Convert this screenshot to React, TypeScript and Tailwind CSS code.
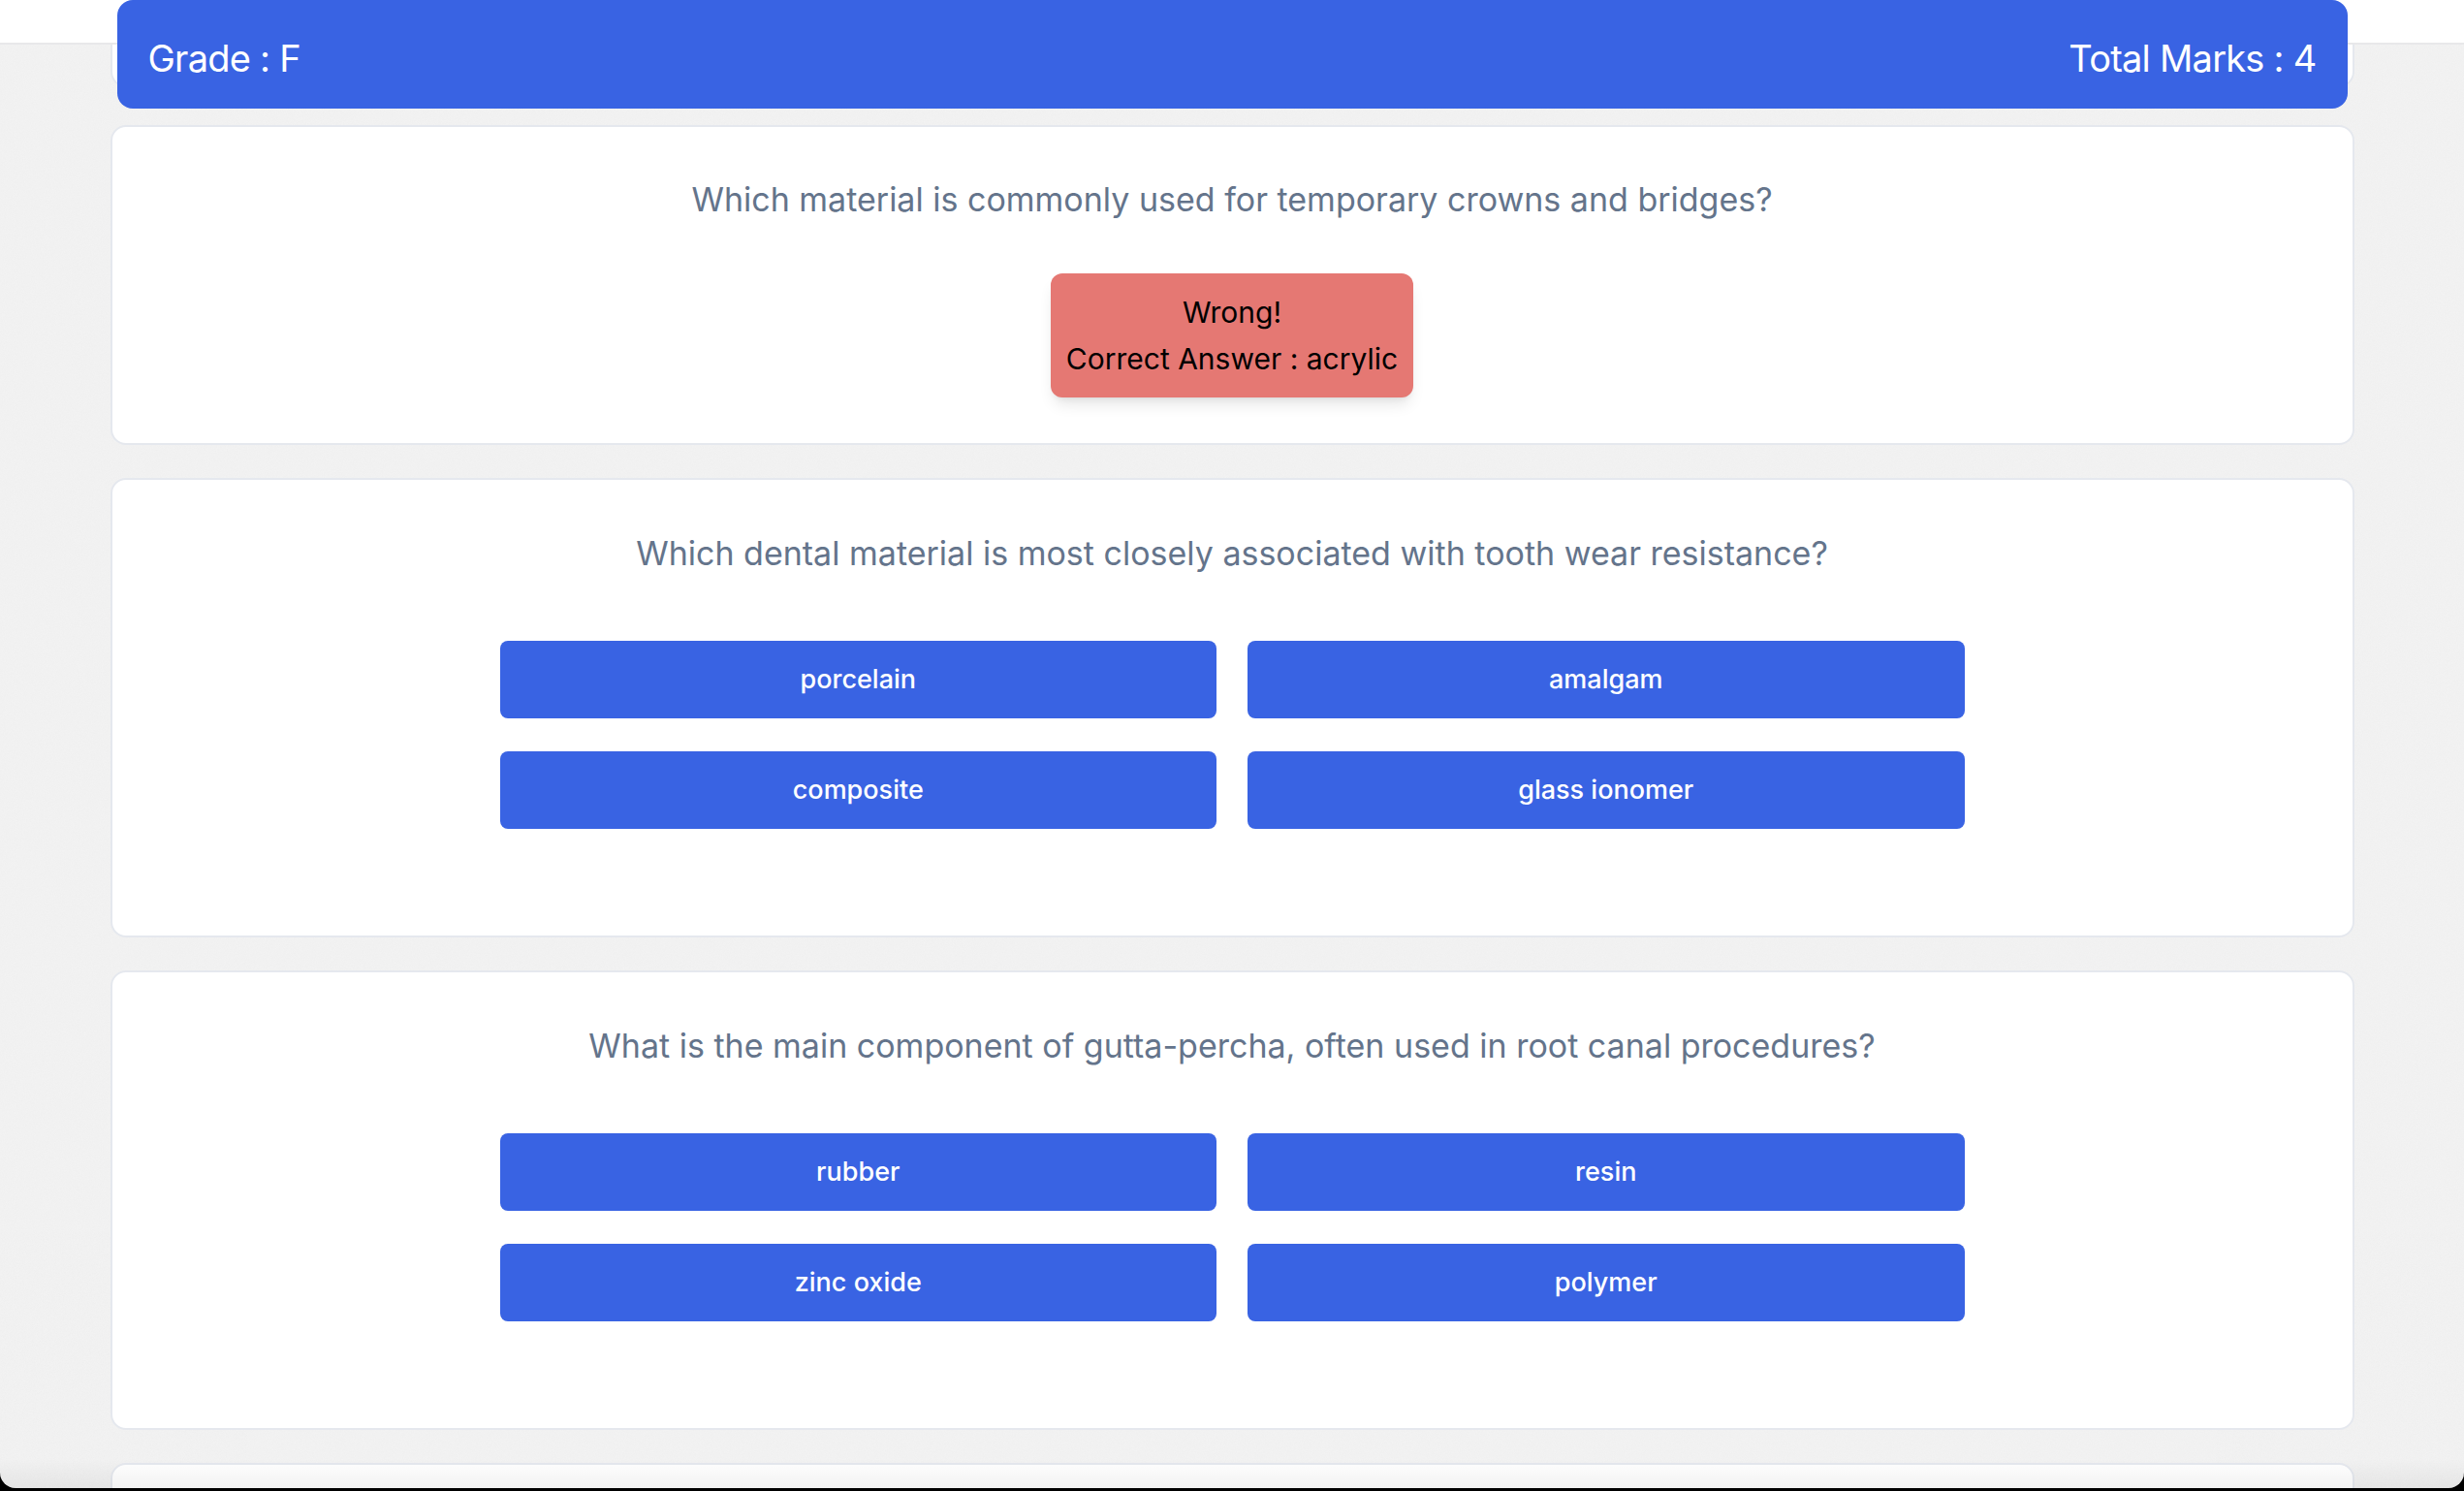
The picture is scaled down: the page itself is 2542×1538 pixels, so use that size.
import React from "react"

type Question = {
  question: string
  options: string[]
}

const questions: Question[] = [
  {
    question: "Which dental material is most closely associated with tooth wear resistance?",
    options: ["porcelain", "amalgam", "composite", "glass ionomer"],
  },
  {
    question: "What is the main component of gutta-percha, often used in root canal procedures?",
    options: ["rubber", "resin", "zinc oxide", "polymer"],
  },
]

function QuestionCard({ q }: { q: Question }) {
  return (
    <div className="bg-white border-2 border-[#e5e8ee] rounded-2xl pt-[52px] pb-[110px] flex flex-col items-center">
      <p className="text-[34px] leading-[48px] text-[#64748b]">{q.question}</p>
      <div className="mt-[66px] w-[1511px] grid grid-cols-2 gap-x-[32px] gap-y-[34px]">
        {q.options.map((opt) => (
          <button
            key={opt}
            className="h-[80px] rounded-lg bg-[#3963e3] text-white text-[27px] font-medium"
          >
            {opt}
          </button>
        ))}
      </div>
    </div>
  )
}

export default function App() {
  return (
    <div className="h-[1538px] bg-black overflow-hidden" style={{ fontFamily: "Inter, 'Noto Sans', sans-serif" }}>
      <div className="relative h-[1535px] rounded-b-[16px] overflow-hidden bg-[#f3f3f3]">
        {/* paper-like noise of the page background */}
        <svg className="absolute inset-0 w-full h-full opacity-[0.35]" aria-hidden="true">
          <filter id="noise">
            <feTurbulence type="fractalNoise" baseFrequency="0.9" numOctaves="2" stitchTiles="stitch" />
            <feColorMatrix type="matrix" values="0 0 0 0 0.75  0 0 0 0 0.75  0 0 0 0 0.75  0 0 0 0.6 0" />
          </filter>
          <rect width="100%" height="100%" filter="url(#noise)" />
        </svg>

        {/* white navbar strip behind the sticky grade bar */}
        <div className="absolute inset-x-0 top-0 h-[46px] bg-white border-b-2 border-[#e8e8ea] z-10" />

        <div className="relative w-[2315px] mx-auto flex flex-col">
          <div className="relative z-20 mx-[7px] h-[112px] rounded-2xl bg-[#3963e3] text-white text-[38px] tracking-[-0.02em] px-8 pt-2 flex items-center justify-between">
            <span>Grade : F</span>
            <span>Total Marks : 4</span>
          </div>

          {/* previous card, scrolled under the header */}
          <div className="-mt-[322px] h-[300px] bg-white border-2 border-[#e5e8ee] rounded-2xl" />

          <div className="mt-[39px] flex flex-col gap-[34px]">
            <div className="bg-white border-2 border-[#e5e8ee] rounded-2xl pt-[51px] pb-[47px] flex flex-col items-center">
              <p className="text-[34px] leading-[48px] text-[#64748b]">
                Which material is commonly used for temporary crowns and bridges?
              </p>
              <div className="mt-[52px] bg-[#e57873] rounded-xl shadow-lg px-4 py-4 text-center text-black text-[30px] leading-[48px]">
                <p>Wrong!</p>
                <p>Correct Answer : acrylic</p>
              </div>
            </div>

            {questions.map((q) => (
              <QuestionCard key={q.question} q={q} />
            ))}

            <div className="h-[300px] bg-white border-2 border-[#e5e8ee] rounded-2xl" />
          </div>
        </div>

        {/* window bottom shading */}
        <div className="absolute inset-x-0 bottom-0 h-[30px] bg-gradient-to-b from-transparent to-black/5 z-30" />
      </div>
    </div>
  )
}
